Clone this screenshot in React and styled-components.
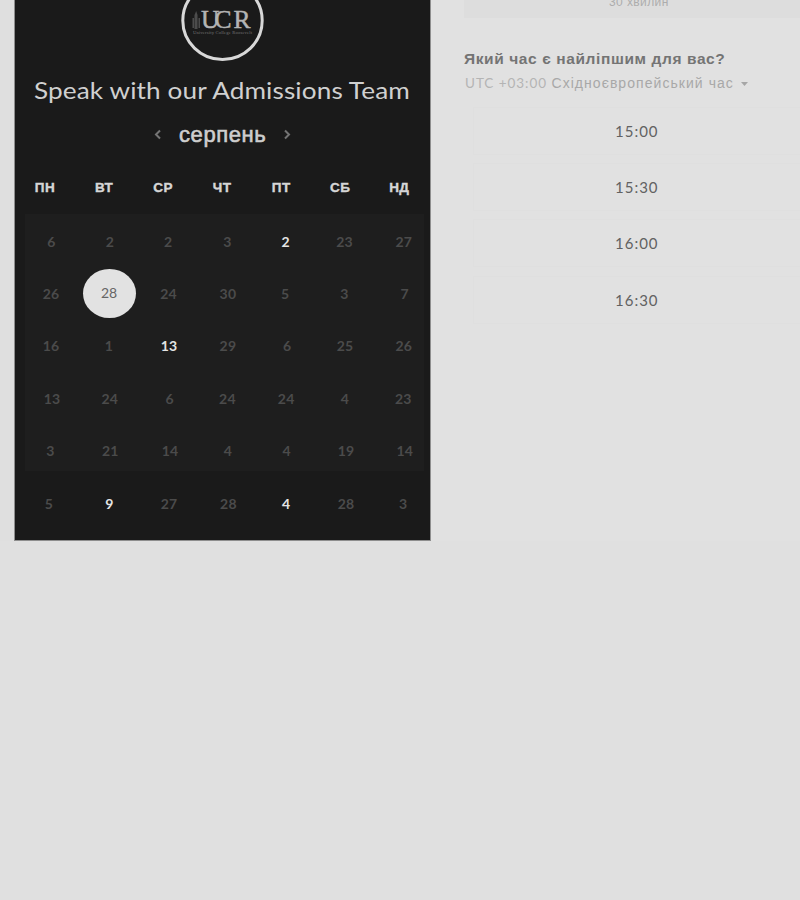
import React from "react";
import styled, { createGlobalStyle } from "styled-components";

const GlobalStyle = createGlobalStyle`
  * { box-sizing: border-box; }
  body {
    margin: 0;
    background: #e0e0e0;
    font-family: Lato, "Liberation Sans", sans-serif;
  }
`;

const Page = styled.main`
  display: flex;
  width: 800px;
  height: 541px;
  padding-left: 14px;
  overflow: hidden;
  background: linear-gradient(90deg, #dfdfdf 14px, #e1e1e1 14px);
`;

const Calendar = styled.section`
  flex: none;
  width: 417px;
  height: 541px;
  background: #1a1a1a;
  border: 1px solid #8e8e8e;
  border-top: 0;
  overflow: hidden;
`;

const Logo = styled.svg`
  display: block;
  width: 90px;
  height: 64px;
  margin-left: 163px;
`;

const Title = styled.h1`
  margin: 0 0 0 19px;
  width: 345px;
  height: 53px;
  color: #d0d0d0;
  font-size: 24px;
  font-weight: 400;
  line-height: 52px;
  letter-spacing: 0.1px;
  white-space: nowrap;
  transform: scaleX(1.09);
  transform-origin: 0 50%;
`;

const MonthBar = styled.div`
  display: flex;
  align-items: center;
  height: 36px;
  margin-left: 138px;
  gap: 15px;
`;

const Month = styled.h2`
  margin: 0 0 0 1px;
  width: 88px;
  color: #cecece;
  font: 400 22px/36px "Liberation Sans", sans-serif;
  -webkit-text-stroke: 0.6px #cecece;
  letter-spacing: 0.6px;
  white-space: nowrap;
`;

const Arrow = styled.svg`
  width: 10px;
  height: 12px;
  fill: none;
  stroke: #747474;
  stroke-width: 2;
`;

const Weekdays = styled.div`
  display: grid;
  grid-template-columns: repeat(7, 52px);
  column-gap: 7.05px;
  height: 61px;
  padding: 10px 0 0 4px;
`;

const Weekday = styled.span`
  color: #d6d6d6;
  font: 700 13.5px/50px "Liberation Sans", sans-serif;
  -webkit-text-stroke: 0.4px #d6d6d6;
  letter-spacing: 0.4px;
  text-align: center;
`;

const Days = styled.div`
  display: grid;
  grid-template-columns: repeat(7, 52px);
  grid-auto-rows: 52.4px;
  column-gap: 6.8px;
  height: 327px;
  padding: 1px 0 0 10px;
  background: linear-gradient(#1e1e1e, #1e1e1e) 10px 0 / 399px 257px no-repeat;
`;

const Day = styled.span`
  display: flex;
  align-items: center;
  justify-content: center;
  padding-left: ${(p) => Math.max(0, p.$shift * 2)}px;
  padding-right: ${(p) => Math.max(0, -p.$shift * 2)}px;
  color: ${(p) => (p.$open ? "#e4e4e4" : "#4b4b4b")};
  font-size: 14px;
  font-weight: 700;
  letter-spacing: 0.2px;
`;

const SelectedDay = styled.span`
  display: flex;
  align-items: center;
  justify-content: center;
  width: 53px;
  height: 49px;
  margin: 2px 0 0 -1.3px;
  padding-bottom: 2px;
  border-radius: 50%;
  background: #e2e2e2;
  color: #666;
  font-size: 14px;
  font-weight: 400;
`;

const Booking = styled.section`
  flex: 1;
  min-width: 0;
  padding-left: 33px;
`;

const Duration = styled.div`
  height: 18px;
  padding-left: 145px;
  background: #dddddd;
  color: #adadad;
  font: 400 12px/5px "Liberation Sans", sans-serif;
  letter-spacing: 0.4px;
`;

const Question = styled.h3`
  margin: 28px 0 0;
  height: 25px;
  color: #747474;
  font: 700 15.5px/25px "Liberation Sans", sans-serif;
  letter-spacing: 0.6px;
  white-space: nowrap;
`;

const Timezone = styled.div`
  display: flex;
  align-items: center;
  height: 25px;
  padding-left: 1px;
  color: #b4b4b4;
  font: 400 13.5px/25px Lato, "Liberation Sans", sans-serif;
  letter-spacing: 0.95px;
  white-space: nowrap;
`;

const ZoneName = styled.span`
  margin-left: 4.5px;
  color: #a8a8a8;
  font-family: "Liberation Sans", sans-serif;
  font-size: 14px;
  letter-spacing: 1.05px;
`;

const Caret = styled.svg`
  width: 7px;
  height: 4px;
  margin-left: 7px;
  fill: #a6a6a6;
`;

const Slots = styled.div`
  display: grid;
  grid-auto-rows: 48px;
  row-gap: 8.2px;
  margin: 11px 0 0 9px;
`;

const Slot = styled.div`
  padding-left: 141px;
  border: 1px solid #dfdfdf;
  border-right: 0;
  color: #626262;
  font-size: 15px;
  line-height: 46px;
  letter-spacing: 1px;
`;

const weekdays = ["ПН", "ВТ", "СР", "ЧТ", "ПТ", "СБ", "НД"];

const days = [
  [6, 0.5], [2, 0], [2, -0.5], [3, 0], [2, -0.5, true], [23, -0.5], [27, 0],
  [26, 0], [28, 0, false, true], [24, 0], [30, 0.5], [5, -1], [3, -0.5], [7, 1],
  [16, 0], [1, -1], [13, 0.5, true], [29, 0.5], [6, 1], [25, 0], [26, 0],
  [13, 1], [24, 0], [6, 1], [24, 0], [24, 0], [4, 0], [23, -0.5],
  [3, -0.5], [21, 0.5], [14, 1.5], [4, 0.5], [4, 0.5], [19, 1], [14, 1],
  [5, -2], [9, -0.5, true], [27, 0.5], [28, 1], [4, 0, true], [28, 1], [3, -0.5],
];

const slots = ["15:00", "15:30", "16:00", "16:30"];

export default function App() {
  return (
    <>
      <GlobalStyle />
      <Page>
        <Calendar>
          <Logo viewBox="178 0 90 64">
            <ellipse cx="222.5" cy="20.5" rx="39.7" ry="39" fill="none" stroke="#d8d8d8" strokeWidth="3" />
            <g fill="#4c4c4c">
              <path d="M196.2 11l1.3 4v14h-3V15z" />
              <path d="M192.5 18h1.5v10h-1.5zM198.5 18h1.5v10h-1.5z" />
            </g>
            <text
              x="201 214.5 233.5"
              y="28"
              fill="#b4b4b4"
              stroke="#b4b4b4"
              strokeWidth="0.5"
              fontFamily="Liberation Serif, serif"
              fontSize="25.5"
            >
              UCR
            </text>
            <text x="193" y="34" fill="#777" fontFamily="Liberation Serif, serif" fontSize="4.6" textLength="59">
              University College Roosevelt
            </text>
          </Logo>
          <Title>Speak with our Admissions Team</Title>
          <MonthBar>
            <Arrow viewBox="0 0 10 12"><path d="M7 1.5L3 5.5L7 9.5" /></Arrow>
            <Month>серпень</Month>
            <Arrow viewBox="0 0 10 12"><path d="M3 1.5L7 5.5L3 9.5" /></Arrow>
          </MonthBar>
          <Weekdays>
            {weekdays.map((name) => <Weekday key={name}>{name}</Weekday>)}
          </Weekdays>
          <Days>
            {days.map(([number, shift, open, selected], i) =>
              selected
                ? <SelectedDay key={i}>{number}</SelectedDay>
                : <Day key={i} $shift={shift} $open={open}>{number}</Day>
            )}
          </Days>
        </Calendar>
        <Booking>
          <Duration>30 хвилин</Duration>
          <Question>Який час є найліпшим для вас?</Question>
          <Timezone>
            UTC +03:00
            <ZoneName>Східноєвропейський час</ZoneName>
            <Caret viewBox="0 0 7 4"><path d="M0 0h7L3.5 4z" /></Caret>
          </Timezone>
          <Slots>
            {slots.map((time) => <Slot key={time}>{time}</Slot>)}
          </Slots>
        </Booking>
      </Page>
    </>
  );
}
